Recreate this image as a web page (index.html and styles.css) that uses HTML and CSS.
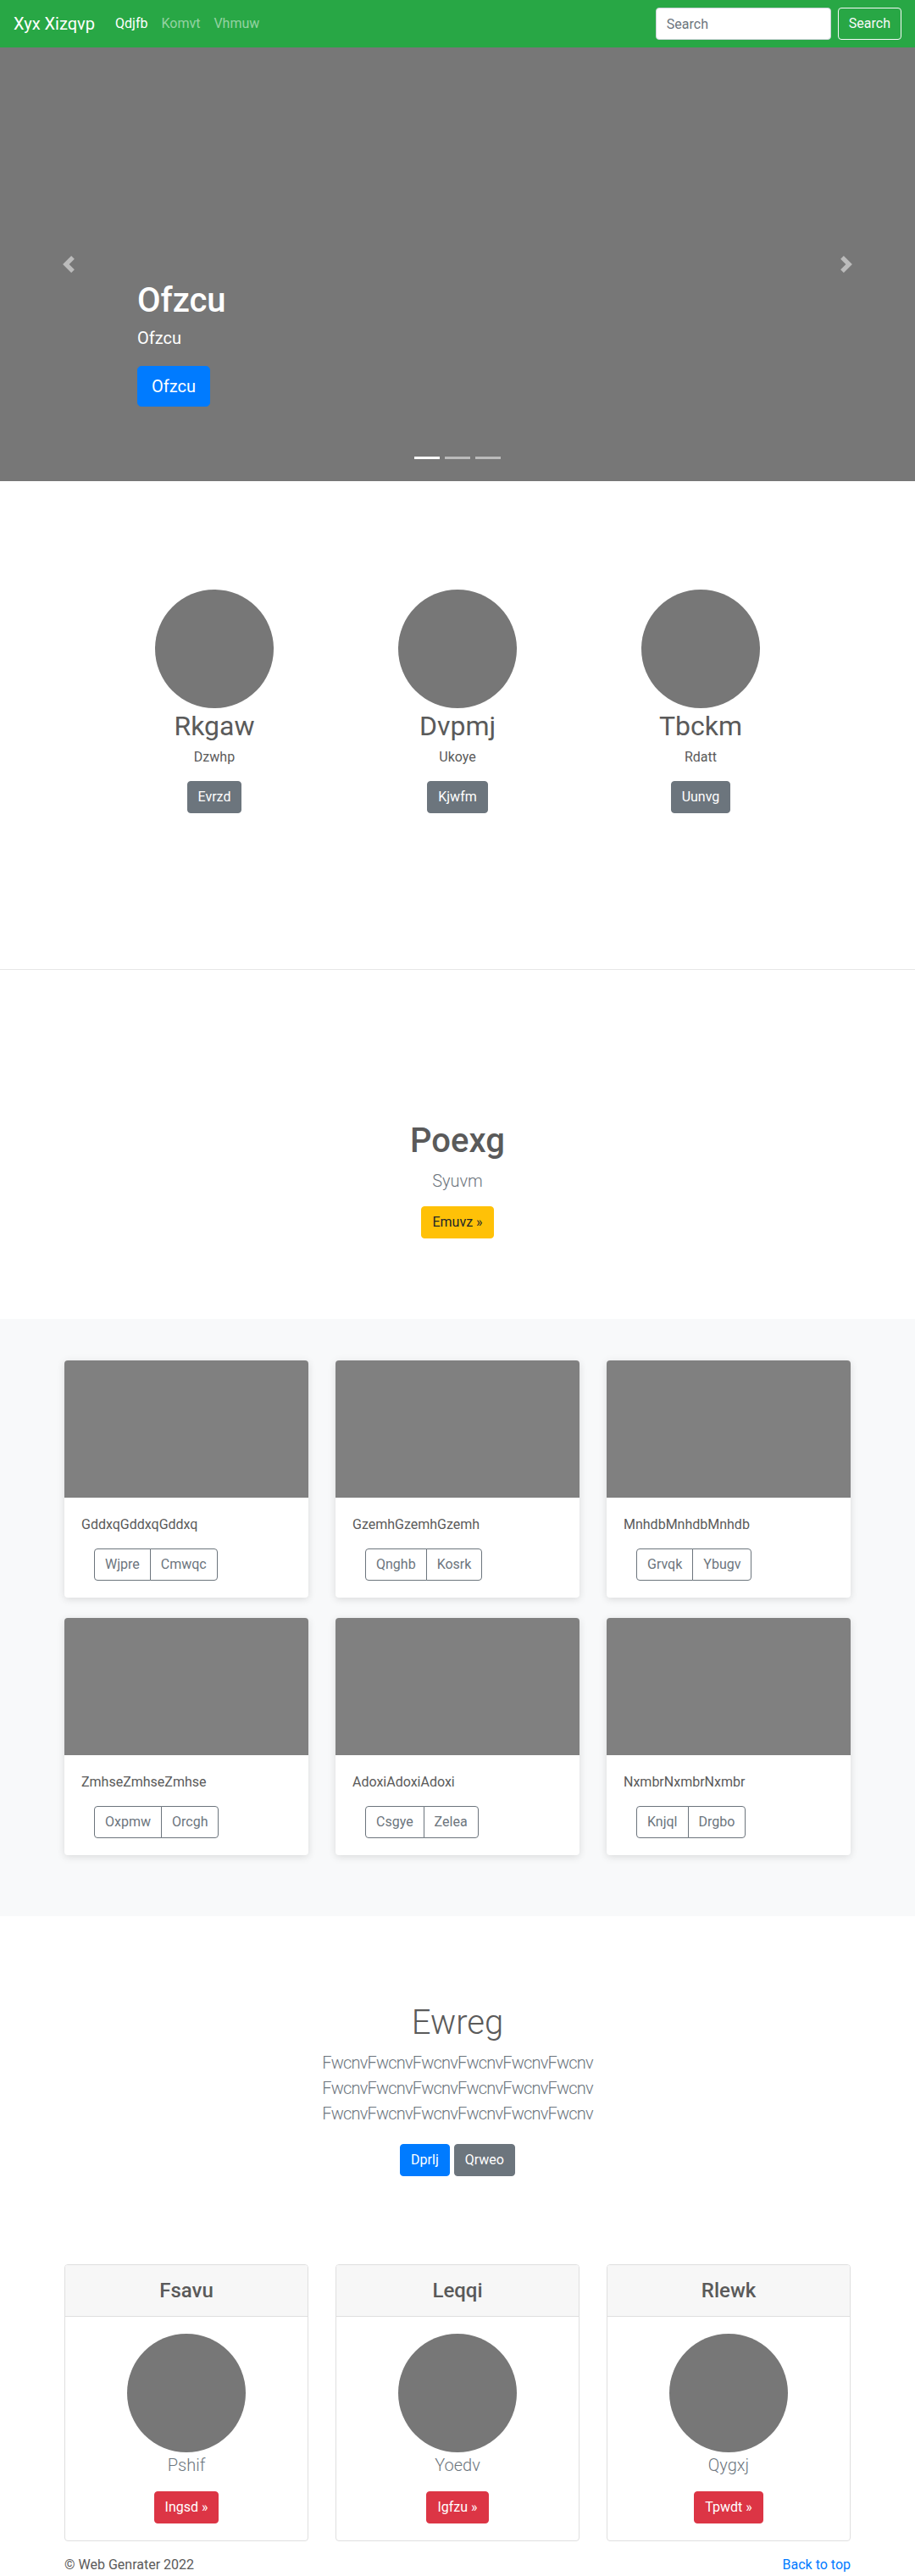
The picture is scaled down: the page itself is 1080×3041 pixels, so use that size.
FILE: index.html
```html
<!DOCTYPE html>
<html lang="en">
<head>
<meta charset="utf-8">
<title>Xyx Xizqvp</title>
<link rel="stylesheet" href="styles.css">
</head>
<body>
<header class="navbar">
  <a class="brand" href="#">Xyx Xizqvp</a>
  <nav class="nav-links">
    <a class="nav-link active" href="#">Qdjfb</a>
    <a class="nav-link" href="#">Komvt</a>
    <a class="nav-link" href="#">Vhmuw</a>
  </nav>
  <form class="search">
    <input class="search-input" type="text" placeholder="Search">
    <button class="search-btn" type="button">Search</button>
  </form>
</header>

<section class="carousel">
  <a class="control prev" href="#">
    <svg viewBox="0 0 8 8"><path d="M5.25 0l-4 4 4 4 1.5-1.5L4.25 4l2.5-2.5L5.25 0z"/></svg>
  </a>
  <a class="control next" href="#">
    <svg viewBox="0 0 8 8"><path d="M2.75 0l-1.5 1.5L3.75 4l-2.5 2.5L2.75 8l4-4-4-4z"/></svg>
  </a>
  <div class="caption">
    <h1>Ofzcu</h1>
    <p>Ofzcu</p>
    <a class="btn btn-lg btn-primary" href="#">Ofzcu</a>
  </div>
  <div class="indicators">
    <span class="active"></span><span></span><span></span>
  </div>
</section>

<section class="marketing">
  <div class="m-col">
    <div class="avatar"></div>
    <h2>Rkgaw</h2>
    <p>Dzwhp</p>
    <a class="btn btn-secondary" href="#">Evrzd</a>
  </div>
  <div class="m-col">
    <div class="avatar"></div>
    <h2>Dvpmj</h2>
    <p>Ukoye</p>
    <a class="btn btn-secondary" href="#">Kjwfm</a>
  </div>
  <div class="m-col">
    <div class="avatar"></div>
    <h2>Tbckm</h2>
    <p>Rdatt</p>
    <a class="btn btn-secondary" href="#">Uunvg</a>
  </div>
</section>

<section class="feature">
  <h1>Poexg</h1>
  <p class="lead muted">Syuvm</p>
  <a class="btn btn-warning" href="#">Emuvz »</a>
</section>

<section class="album">
  <div class="grid">
    <div class="card">
      <div class="card-img"></div>
      <div class="card-body">
        <p class="card-text">GddxqGddxqGddxq</p>
        <div class="btn-group"><a class="btn btn-outline" href="#">Wjpre</a><a class="btn btn-outline" href="#">Cmwqc</a></div>
      </div>
    </div>
    <div class="card">
      <div class="card-img"></div>
      <div class="card-body">
        <p class="card-text">GzemhGzemhGzemh</p>
        <div class="btn-group"><a class="btn btn-outline" href="#">Qnghb</a><a class="btn btn-outline" href="#">Kosrk</a></div>
      </div>
    </div>
    <div class="card">
      <div class="card-img"></div>
      <div class="card-body">
        <p class="card-text">MnhdbMnhdbMnhdb</p>
        <div class="btn-group"><a class="btn btn-outline" href="#">Grvqk</a><a class="btn btn-outline" href="#">Ybugv</a></div>
      </div>
    </div>
    <div class="card">
      <div class="card-img"></div>
      <div class="card-body">
        <p class="card-text">ZmhseZmhseZmhse</p>
        <div class="btn-group"><a class="btn btn-outline" href="#">Oxpmw</a><a class="btn btn-outline" href="#">Orcgh</a></div>
      </div>
    </div>
    <div class="card">
      <div class="card-img"></div>
      <div class="card-body">
        <p class="card-text">AdoxiAdoxiAdoxi</p>
        <div class="btn-group"><a class="btn btn-outline" href="#">Csgye</a><a class="btn btn-outline" href="#">Zelea</a></div>
      </div>
    </div>
    <div class="card">
      <div class="card-img"></div>
      <div class="card-body">
        <p class="card-text">NxmbrNxmbrNxmbr</p>
        <div class="btn-group"><a class="btn btn-outline" href="#">Knjql</a><a class="btn btn-outline" href="#">Drgbo</a></div>
      </div>
    </div>
  </div>
</section>

<section class="jumbo">
  <h1>Ewreg</h1>
  <p class="lead muted">FwcnvFwcnvFwcnvFwcnvFwcnvFwcnv FwcnvFwcnvFwcnvFwcnvFwcnvFwcnv FwcnvFwcnvFwcnvFwcnvFwcnvFwcnv</p>
  <div class="jumbo-actions">
    <a class="btn btn-primary" href="#">Dprlj</a>
    <a class="btn btn-secondary" href="#">Qrweo</a>
  </div>
</section>

<section class="pricing grid">
  <div class="p-card">
    <div class="p-header"><h4>Fsavu</h4></div>
    <div class="p-body">
      <div class="avatar"></div>
      <p class="lead muted">Pshif</p>
      <a class="btn btn-danger" href="#">Ingsd »</a>
    </div>
  </div>
  <div class="p-card">
    <div class="p-header"><h4>Leqqi</h4></div>
    <div class="p-body">
      <div class="avatar"></div>
      <p class="lead muted">Yoedv</p>
      <a class="btn btn-danger" href="#">Igfzu »</a>
    </div>
  </div>
  <div class="p-card">
    <div class="p-header"><h4>Rlewk</h4></div>
    <div class="p-body">
      <div class="avatar"></div>
      <p class="lead muted">Qygxj</p>
      <a class="btn btn-danger" href="#">Tpwdt »</a>
    </div>
  </div>
</section>

<footer class="footer">
  <p>© Web Genrater 2022</p>
  <a class="top-link" href="#">Back to top</a>
</footer>
</body>
</html>
```

FILE: styles.css
```css
* { box-sizing: border-box; }

body {
  margin: 0;
  font-family: Roboto, "Noto Sans", "Liberation Sans", sans-serif;
  font-size: 16px;
  line-height: 1.5;
  color: #5a5a5a;
  background: #fff;
}

h1, h2, h4, p { margin: 0; }

/* navbar */
.navbar {
  display: flex;
  align-items: center;
  height: 56px;
  padding: 8px 16px;
  background: #28a745;
}
.brand {
  font-size: 20px;
  line-height: 30px;
  color: #fff;
  margin-right: 16px;
  text-decoration: none;
}
.nav-links { display: flex; flex: 1; }
.nav-link {
  padding: 8px;
  color: rgba(255, 255, 255, 0.5);
  text-decoration: none;
}
.nav-link.active { color: #fff; }
.search { display: flex; gap: 8px; margin: 0; }
.search-input {
  width: 207px;
  height: 38px;
  padding: 6px 12px;
  border: 1px solid #ced4da;
  border-radius: 4px;
  font: inherit;
  color: #495057;
  background: #fff;
}
.search-input::placeholder { color: #6c757d; }
.search-btn {
  height: 38px;
  padding: 6px 12px;
  border: 1px solid #f8f9fa;
  border-radius: 4px;
  background: transparent;
  color: #f8f9fa;
  font: inherit;
}

/* buttons */
.btn {
  display: inline-block;
  padding: 6px 12px;
  font-size: 16px;
  line-height: 24px;
  border: 1px solid transparent;
  border-radius: 4px;
  text-decoration: none;
  text-align: center;
}
.btn-lg {
  padding: 8px 16px;
  font-size: 20px;
  line-height: 30px;
  border-radius: 4.8px;
}
.btn-primary { background: #007bff; border-color: #007bff; color: #fff; }
.btn-secondary { background: #6c757d; border-color: #6c757d; color: #fff; }
.btn-warning { background: #ffc107; border-color: #ffc107; color: #212529; }
.btn-danger { background: #dc3545; border-color: #dc3545; color: #fff; }
.btn-outline { background: #fff; border-color: #6c757d; color: #6c757d; }

/* carousel */
.carousel {
  position: relative;
  height: 512px;
  background: #777;
}
.control {
  position: absolute;
  top: 0;
  bottom: 0;
  width: 162px;
  display: flex;
  align-items: center;
  justify-content: center;
  opacity: 0.5;
}
.control.prev { left: 0; }
.control.next { right: 0; }
.control svg { width: 20px; height: 20px; fill: #fff; }
.caption {
  position: absolute;
  left: 162px;
  right: 162px;
  top: 275px;
  color: #fff;
}
.caption h1 {
  font-size: 40px;
  line-height: 48px;
  font-weight: 500;
  margin-bottom: 5px;
}
.caption p {
  font-size: 20px;
  line-height: 30px;
  margin-bottom: 18px;
}
.indicators {
  position: absolute;
  left: 0;
  right: 0;
  bottom: 26px;
  display: flex;
  justify-content: center;
  gap: 6px;
}
.indicators span {
  width: 30px;
  height: 3px;
  background: rgba(255, 255, 255, 0.5);
}
.indicators span.active { background: #fff; }

/* marketing */
.marketing {
  display: grid;
  grid-template-columns: repeat(3, 287px);
  justify-content: center;
  padding: 128px 0 184px;
  border-bottom: 1px solid #e6e6e6;
  text-align: center;
}
.avatar {
  width: 140px;
  height: 140px;
  border-radius: 50%;
  background: #777;
  margin: 0 auto;
}
.m-col h2 {
  font-size: 32px;
  line-height: 38px;
  font-weight: 400;
  margin: 2px 0 6px;
}
.m-col p { margin-bottom: 16px; }

/* feature */
.feature {
  text-align: center;
  padding: 178px 0 95px;
}
.feature h1 {
  font-size: 40px;
  line-height: 48px;
  font-weight: 500;
  margin-bottom: 8px;
}
.lead {
  font-size: 20px;
  line-height: 30px;
  font-weight: 300;
}
.muted { color: #6c757d; }
.feature .lead { margin-bottom: 15px; }

/* album */
.album {
  background: #f8f9fa;
  padding: 49px 0 72px;
}
.grid {
  width: 960px;
  margin: 0 auto;
  padding: 0 16px;
  display: grid;
  grid-template-columns: repeat(3, 288px);
  column-gap: 32px;
  row-gap: 24px;
  align-items: start;
}
.card {
  background: #fff;
  border-radius: 4px;
  overflow: hidden;
  box-shadow: 0 2px 10px rgba(0, 0, 0, 0.13);
}
.card-img {
  height: 162px;
  background: #808080;
}
.card-body { padding: 20px; }
.card-text { margin-bottom: 16px; }
.btn-group {
  display: inline-flex;
  margin-left: 15px;
}
.btn-group .btn:first-child { border-radius: 4px 0 0 4px; }
.btn-group .btn:last-child { border-radius: 0 4px 4px 0; margin-left: -1px; }

/* jumbotron */
.jumbo {
  text-align: center;
  padding: 102px 0 104px;
}
.jumbo h1 {
  font-size: 40px;
  line-height: 48px;
  font-weight: 300;
  margin-bottom: 8px;
}
.jumbo .lead {
  max-width: 450px;
  margin: 0 auto;
  letter-spacing: -0.8px;
}
.jumbo-actions {
  display: flex;
  justify-content: center;
  gap: 5px;
  margin-top: 21px;
}

/* pricing */
.p-card {
  border: 1px solid #dfdfdf;
  border-radius: 4px;
  overflow: hidden;
  text-align: center;
}
.p-header {
  background: #f7f7f7;
  border-bottom: 1px solid #dfdfdf;
  padding: 12px 20px;
}
.p-header h4 {
  font-size: 24px;
  line-height: 36px;
  font-weight: 500;
}
.p-body { padding: 20px; }
.p-body .lead { margin-bottom: 16px; }

/* footer */
.footer {
  width: 960px;
  margin: 0 auto;
  padding: 16px 16px 0;
  display: flex;
  justify-content: space-between;
}
.top-link { color: #007bff; text-decoration: none; }
```
